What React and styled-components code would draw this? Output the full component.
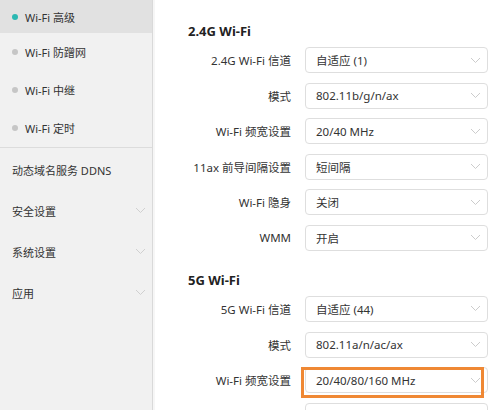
import React from "react";
import styled, { createGlobalStyle } from "styled-components";

const GlobalStyle = createGlobalStyle`
  html, body {
    margin: 0;
    padding: 0;
    background: #ffffff;
    overflow: hidden;
  }
  body {
    font-family: "Noto Sans", "Noto Sans CJK SC", sans-serif;
    color: #333333;
  }
`;

const Page = styled.div`
  display: flex;
  width: 500px;
  height: 410px;
  overflow: hidden;
`;

const Sidebar = styled.nav`
  width: 152px;
  flex-shrink: 0;
  background: #f1f1f1;
  border-right: 1px solid #d9d9d9;
  box-shadow: 2px 0 0 #f6f6f6;
  display: flex;
  flex-direction: column;
`;

const SubList = styled.div`
  display: flex;
  flex-direction: column;
  border-bottom: 1px solid #dcdcdc;
`;

const SubItem = styled.div`
  height: ${(p) => (p.$first ? 33 : 38)}px;
  display: flex;
  align-items: center;
  gap: 7px;
  padding-left: 12px;
  font-size: 11px;
  color: #333;
  background: ${(p) => (p.$active ? "#e1e1e1" : "transparent")};
`;

const Dot = styled.span`
  width: 6px;
  height: 6px;
  border-radius: 50%;
  background: ${(p) => (p.$active ? "#2bb8b2" : "#c6c6c6")};
`;

const MainList = styled.div`
  display: flex;
  flex-direction: column;
  padding-top: 1px;
`;

const MainItem = styled.div`
  height: 41px;
  display: flex;
  align-items: center;
  justify-content: space-between;
  padding: 0 6px 0 12px;
  font-size: 11px;
  color: #333;
`;

const Content = styled.main`
  flex: 1;
  padding: 21px 0 0 35px;
  display: flex;
  flex-direction: column;
`;

const Section = styled.section`
  display: flex;
  flex-direction: column;
  margin-bottom: 19px;
`;

const Heading = styled.h3`
  margin: 0 0 6px;
  height: 20px;
  line-height: 20px;
  font-size: 13px;
  font-weight: 700;
  color: #222;
`;

const Rows = styled.div`
  display: flex;
  flex-direction: column;
  gap: 9.6px;
`;

const Row = styled.div`
  display: flex;
  align-items: center;
  height: 26px;
`;

const Label = styled.div`
  width: 103px;
  text-align: right;
  font-size: 11.5px;
  color: #333;
  white-space: nowrap;
`;

const Select = styled.div`
  position: relative;
  margin-left: 14px;
  width: 183px;
  height: 26px;
  box-sizing: border-box;
  border: 1px solid #dedede;
  border-radius: 4px;
  display: flex;
  align-items: center;
  justify-content: space-between;
  padding: 0 6px 0 10px;
  font-size: 11.5px;
  color: #333;
  background: #fff;
`;

const Highlight = styled.div`
  position: absolute;
  left: -5px;
  top: -1px;
  width: 183px;
  height: 31px;
  box-sizing: border-box;
  border: 3px solid #ef8834;
  pointer-events: none;
`;

const Chevron = ({ color = "#cccccc" }) => (
  <svg width="11" height="7" viewBox="0 0 11 7" fill="none">
    <path d="M1 1l4.5 4.5L10 1" stroke={color} strokeWidth="1" />
  </svg>
);

const wifiSub = [
  { label: "Wi-Fi 高级", active: true },
  { label: "Wi-Fi 防蹭网" },
  { label: "Wi-Fi 中继" },
  { label: "Wi-Fi 定时" },
];

const mainItems = [
  { label: "动态域名服务 DDNS" },
  { label: "安全设置", arrow: true },
  { label: "系统设置", arrow: true },
  { label: "应用", arrow: true },
];

const sections = [
  {
    title: "2.4G Wi-Fi",
    rows: [
      ["2.4G Wi-Fi 信道", "自适应 (1)"],
      ["模式", "802.11b/g/n/ax"],
      ["Wi-Fi 频宽设置", "20/40 MHz"],
      ["11ax 前导间隔设置", "短间隔"],
      ["Wi-Fi 隐身", "关闭"],
      ["WMM", "开启"],
    ],
  },
  {
    title: "5G Wi-Fi",
    rows: [
      ["5G Wi-Fi 信道", "自适应 (44)"],
      ["模式", "802.11a/n/ac/ax"],
      ["Wi-Fi 频宽设置", "20/40/80/160 MHz", true],
      ["11ax 前导间隔设置", "短间隔"],
    ],
  },
];

export default function App() {
  return (
    <>
      <GlobalStyle />
      <Page>
        <Sidebar>
          <SubList>
            {wifiSub.map((item, i) => (
              <SubItem key={item.label} $active={item.active} $first={i === 0}>
                <Dot $active={item.active} />
                {item.label}
              </SubItem>
            ))}
          </SubList>
          <MainList>
            {mainItems.map((item) => (
              <MainItem key={item.label}>
                {item.label}
                {item.arrow && <Chevron color="#d0d0d0" />}
              </MainItem>
            ))}
          </MainList>
        </Sidebar>
        <Content>
          {sections.map((sec) => (
            <Section key={sec.title}>
              <Heading>{sec.title}</Heading>
              <Rows>
                {sec.rows.map(([label, value, marked]) => (
                  <Row key={label}>
                    <Label>{label}</Label>
                    <Select>
                      {value}
                      <Chevron />
                      {marked && <Highlight />}
                    </Select>
                  </Row>
                ))}
              </Rows>
            </Section>
          ))}
        </Content>
      </Page>
    </>
  );
}
